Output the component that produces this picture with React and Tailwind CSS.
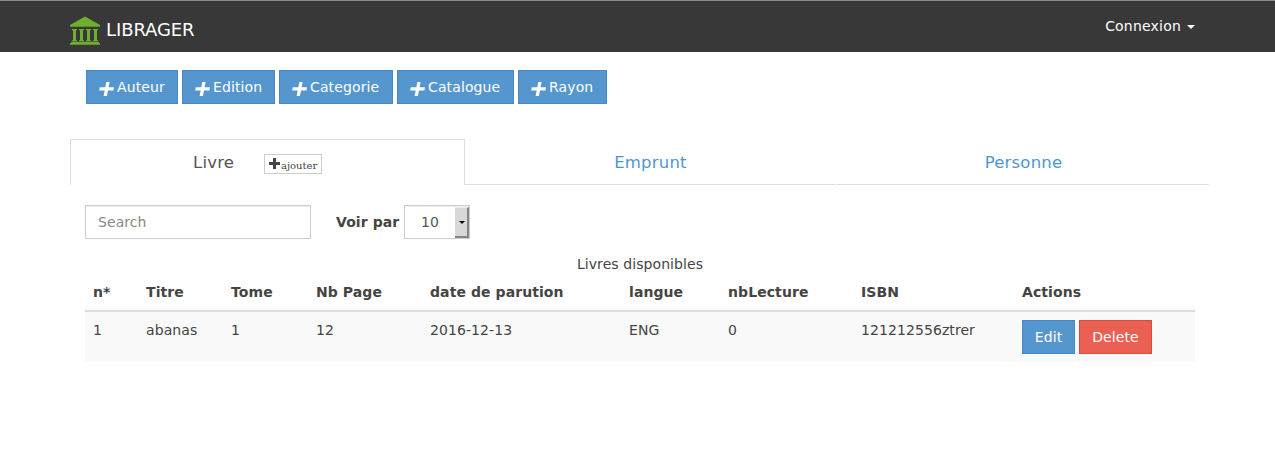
const COLUMNS = [
  { label: 'n*', value: '1', width: 'w-[53px]' },
  { label: 'Titre', value: 'abanas', width: 'w-[85px]' },
  { label: 'Tome', value: '1', width: 'w-[85px]' },
  { label: 'Nb Page', value: '12', width: 'w-[114px]' },
  { label: 'date de parution', value: '2016-12-13', width: 'w-[199px]' },
  { label: 'langue', value: 'ENG', width: 'w-[99px]' },
  { label: 'nbLecture', value: '0', width: 'w-[133px]' },
  { label: 'ISBN', value: '121212556ztrer', width: 'w-[161px]' },
];

const CREATE_BUTTONS = [
  { label: 'Auteur', width: 'w-[92px]' },
  { label: 'Edition', width: 'w-[93px]' },
  { label: 'Categorie', width: 'w-[114px]' },
  { label: 'Catalogue', width: 'w-[117px]' },
  { label: 'Rayon', width: 'w-[89px]' },
];

function Logo() {
  return (
    <svg className="mt-[15px] h-[30px] w-[30px] shrink-0" viewBox="0 0 30 30" fill="#6eb02c">
      <path d="M15 0.5 30 9v1.8H0V9z" />
      <path d="M2 13h5v1.2H2zM9 13h5v1.2H9zM16 13h5v1.2h-5zM23 13h5v1.2h-5zM3 14h3v11H3zM10 14h3v11h-3zM17 14h3v11h-3zM24 14h3v11h-3zM2 24.2h5v1H2zM9 24.2h5v1H9zM16 24.2h5v1h-5zM23 24.2h5v1h-5z" />
      <path d="M1.3 25.7h27.4v1.3H30v1.8H0V27h1.3z" />
    </svg>
  );
}

function SlantedPlus() {
  return (
    <svg className="mt-[3px] -ml-px h-[14px] w-[15px] shrink-0" viewBox="0 0 15 14" fill="#fff">
      <path d="M7.3 0H10.6L9.6 5.2H15L14.4 8.4H9L7.9 14H4.6L5.7 8.4H0.2L0.8 5.2H6.3z" />
    </svg>
  );
}

function Plus() {
  return (
    <svg className="-mt-[2px] h-[11px] w-[11px] shrink-0" viewBox="0 0 11 11" fill="#444">
      <path d="M4 0h3v4h4v3H7v4H4V7H0V4h4z" />
    </svg>
  );
}

export default function App() {
  return (
    <div className="h-[458px] w-full overflow-hidden bg-white font-['DejaVu_Sans',sans-serif] text-sm leading-5 tracking-[0.08px] text-[#444]">
      <header className="h-[52px] border-t border-[#8b8b8b] bg-[#383838]">
        <div className="ml-[70px] flex w-[1125px] justify-between text-white">
          <div className="flex">
            <Logo />
            <span className="mt-[18px] ml-1.5 text-[18px] leading-[22px] tracking-[-0.1px]">LIBRAGER</span>
          </div>
          <div className="mt-[15px] flex h-5 items-center tracking-[0.2px]">
            Connexion
            <span className="mt-0.5 ml-1.5 border-x-4 border-t-4 border-x-transparent border-t-white" />
          </div>
        </div>
      </header>

      <main className="ml-[70px] w-[1139px]">
        <div className="mt-[18px] ml-4 flex gap-1">
          {CREATE_BUTTONS.map((b) => (
            <button
              key={b.label}
              className={`flex h-[34px] items-center border border-[#4489c5] bg-[#5696cf] pl-[13px] tracking-[0.12px] text-white ${b.width}`}
            >
              <SlantedPlus />
              <span className="ml-[3px]">{b.label}</span>
            </button>
          ))}
        </div>

        <nav className="mt-[35px] flex h-[46px] text-[16.5px] tracking-[0.2px]">
          <div className="flex w-[395px] border border-b-0 border-[#ddd]">
            <span className="mt-[13px] ml-[122px] w-[42px] text-[#555]">Livre</span>
            <button className="mt-3.5 ml-[29px] flex h-5 w-[58px] items-center border border-[#ccc] pl-1 font-['DejaVu_Serif',serif] text-[10px] leading-4 tracking-normal">
              <Plus />
              <span className="mt-1 ml-px">ajouter</span>
            </button>
          </div>
          <div className="w-[371px] border-b border-[#ddd] pt-[14px] text-center text-[#4e96d0]">Emprunt</div>
          <div className="ml-px w-[372px] border-b border-[#ddd] pt-[14px] pl-px text-center text-[#4e96d0]">Personne</div>
        </nav>

        <section className="ml-[15px] w-[1110px]">
          <div className="mt-5 flex h-[34px] items-center">
            <input
              placeholder="Search"
              className="h-[34px] w-[226px] border border-[#ccc] px-3 shadow-[inset_0_1px_1px_rgba(0,0,0,0.075)] placeholder:text-[#888]"
            />
            <b className="ml-[25px] w-[68px] whitespace-nowrap">Voir par</b>
            <div className="flex h-[34px] w-[66px] justify-between border border-[#ccc] shadow-[inset_0_1px_1px_rgba(0,0,0,0.075)]">
              <span className="mt-1.5 ml-4 text-[#555]">10</span>
              <span className="mt-px flex h-[31px] w-[14px] items-center justify-center border-t border-r-2 border-b-2 border-t-[#ececec] border-r-[#858585] border-b-[#858585] bg-[#d8d8d8]">
                <span className="ml-0.5 border-x-[3px] border-t-[3px] border-x-transparent border-t-black" />
              </span>
            </div>
          </div>

          <table className="mt-[15px] w-[1110px] table-fixed border-collapse text-left">
            <caption className="h-5">Livres disponibles</caption>
            <thead>
              <tr className="h-[37px] border-b-2 border-[#ddd]">
                {COLUMNS.map((c) => (
                  <th key={c.label} className={`px-2 py-0 whitespace-nowrap ${c.width}`}>{c.label}</th>
                ))}
                <th className="px-2 py-0">Actions</th>
              </tr>
            </thead>
            <tbody>
              <tr className="h-[51px] bg-[#f9f9f9] align-top">
                {COLUMNS.map((c) => (
                  <td key={c.label} className="px-2 pt-2">{c.value}</td>
                ))}
                <td className="px-2 pt-2">
                  <div className="flex gap-1 text-white">
                    <button className="h-[34px] w-[53px] border border-[#4489c5] bg-[#5696cf]">Edit</button>
                    <button className="h-[34px] w-[73px] border border-[#de4a3b] bg-[#ea6052]">Delete</button>
                  </div>
                </td>
              </tr>
            </tbody>
          </table>
        </section>
      </main>
    </div>
  );
}
